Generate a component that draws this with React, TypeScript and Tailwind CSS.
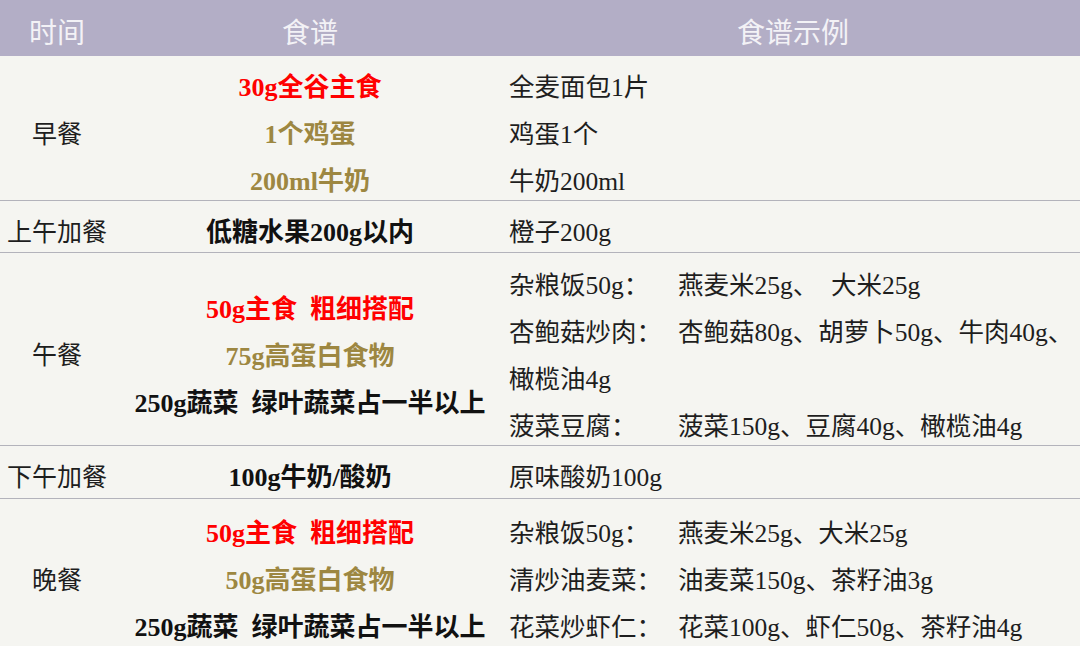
import React from 'react';

// ─── Data ───

type Tone = 'red' | 'gold' | 'black';

interface Meal {
  time: string;
  recipe: { text: string; tone: Tone }[];
  examples: ([string, string] | [string])[];
  row: string;
}

const meals: Meal[] = [
  {
    time: '早餐',
    recipe: [
      { text: '30g全谷主食', tone: 'red' },
      { text: '1个鸡蛋', tone: 'gold' },
      { text: '200ml牛奶', tone: 'gold' },
    ],
    examples: [['全麦面包1片'], ['鸡蛋1个'], ['牛奶200ml']],
    row: 'h-[145px] pt-[8px]',
  },
  {
    time: '上午加餐',
    recipe: [{ text: '低糖水果200g以内', tone: 'black' }],
    examples: [['橙子200g']],
    row: 'h-[52px] pt-[8px]',
  },
  {
    time: '午餐',
    recipe: [
      { text: '50g主食  粗细搭配', tone: 'red' },
      { text: '75g高蛋白食物', tone: 'gold' },
      { text: '250g蔬菜  绿叶蔬菜占一半以上', tone: 'black' },
    ],
    examples: [
      ['杂粮饭50g：', '燕麦米25g、  大米25g'],
      ['杏鲍菇炒肉：', '杏鲍菇80g、胡萝卜50g、牛肉40g、'],
      ['橄榄油4g'],
      ['菠菜豆腐：', '菠菜150g、豆腐40g、橄榄油4g'],
    ],
    row: 'h-[193px] pt-[9px]',
  },
  {
    time: '下午加餐',
    recipe: [{ text: '100g牛奶/酸奶', tone: 'black' }],
    examples: [['原味酸奶100g']],
    row: 'h-[53px] pt-[8px]',
  },
  {
    time: '晚餐',
    recipe: [
      { text: '50g主食  粗细搭配', tone: 'red' },
      { text: '50g高蛋白食物', tone: 'gold' },
      { text: '250g蔬菜  绿叶蔬菜占一半以上', tone: 'black' },
    ],
    examples: [
      ['杂粮饭50g：', '燕麦米25g、大米25g'],
      ['清炒油麦菜：', '油麦菜150g、茶籽油3g'],
      ['花菜炒虾仁：', '花菜100g、虾仁50g、茶籽油4g'],
    ],
    row: 'h-[160px] pt-[6px]',
  },
];

const toneClass: Record<Tone, string> = {
  red: 'text-[#ff0000]',
  gold: 'text-[#9d8741]',
  black: 'text-[#111111]',
};

const font = {
  fontFamily: '"Liberation Serif", "Noto Sans CJK SC", serif',
};

// ─── App ───

function App() {
  return (
    <div className="w-[1080px] h-[646px] overflow-hidden bg-[#f5f5f1]" style={font}>
      {/* header */}
      <div className="grid grid-cols-[114px_392px_1fr] h-[56px] bg-[#b3aec6] text-[28px] leading-[32px] text-[#f3f2f6] items-center pt-[12px]">
        <div className="text-center">时间</div>
        <div className="text-center">食谱</div>
        <div className="text-center">食谱示例</div>
      </div>

      {meals.map((m, i) => (
        <div
          key={m.time}
          className={`grid grid-cols-[114px_392px_1fr] ${m.row} ${
            i < meals.length - 1 ? 'border-b border-[#b3b3bb]' : ''
          }`}
        >
          <div className="flex items-center justify-center text-[25px] text-[#1e1e1e] pb-[3px]">
            {m.time}
          </div>
          <div className="flex flex-col justify-center items-center text-[26px] font-bold leading-[47px] pb-[3px]">
            {m.recipe.map((r) => (
              <div key={r.text} className={`whitespace-pre ${toneClass[r.tone]}`}>
                {r.text}
              </div>
            ))}
          </div>
          <div className="flex flex-col justify-center pl-[3px] text-[25.5px] text-[#1e1e1e] leading-[47px] pb-[3px]">
            {m.examples.map((e, j) => (
              <div key={j} className="flex whitespace-pre">
                <span className={e.length > 1 ? 'w-[169px] shrink-0' : ''}>{e[0]}</span>
                {e[1] && <span>{e[1]}</span>}
              </div>
            ))}
          </div>
        </div>
      ))}
    </div>
  );
}

export default App;
